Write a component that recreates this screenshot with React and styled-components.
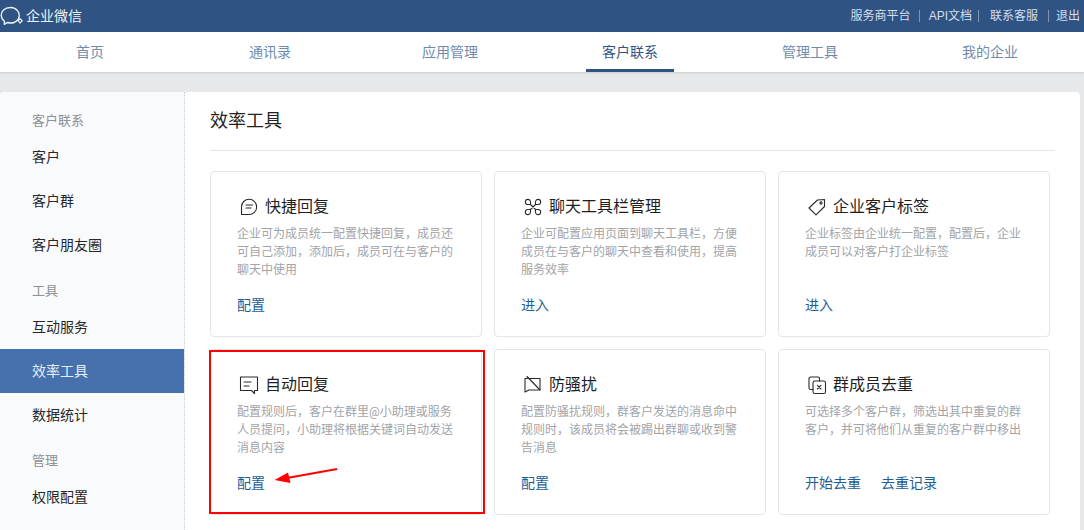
import React from "react";
import styled, { createGlobalStyle } from "styled-components";

const Global = createGlobalStyle`
  html, body { margin: 0; padding: 0; height: 530px; overflow: hidden; background: #e7e8ea; }
  body { font-family: "Liberation Sans", "Noto Sans CJK SC", sans-serif; }
  * { box-sizing: border-box; }
`;

const Page = styled.div`width: 1084px; height: 530px; overflow: hidden;`;
const TopBar = styled.header`
  height: 32px; background: #2f5484; display: flex; align-items: center; justify-content: space-between; padding-right: 4px;
`;
const Brand = styled.div`display: flex; align-items: center; gap: 2px; color: #eef2f6; font-size: 14px; margin-top: -2px;`;
const TopLinks = styled.nav`display: flex; align-items: center;`;
const TopLink = styled.a`
  color: #d6deea; font-size: 12px; line-height: 12px; padding: 0 ${p => p.$r}px 0 ${p => p.$l}px;
  border-right: ${p => p.$r ? "1px solid #7f97b5" : "none"};
`;
const MainNav = styled.nav`
  height: 40px; background: #fff; display: grid; grid-template-columns: repeat(6, 180px); justify-content: start;
  box-shadow: 0 1px 2px rgba(0,0,0,.13);
`;
const NavItem = styled.a`
  display: flex; justify-content: center; align-items: center; height: 40px; padding-bottom: 2px; font-size: 14px; color: #6f8bae; position: relative;
  ${p => p.$active && `
    color: #2f5484;
    &::after { content: ""; position: absolute; left: 46px; width: 88px; bottom: 0; height: 3px; background: #2f5484; }
  `}
`;
const Panel = styled.main`
  margin-top: 20px; width: 1080px; height: 480px; background: #fff; border-radius: 4px 4px 0 0; display: flex; overflow: hidden;
`;
const Sidebar = styled.aside`
  width: 185px; flex: none; background: #f9fafc; border-right: 1px dotted #c9ccd2; padding-top: 13px;
`;
const SideLabel = styled.div`
  height: 30px; padding-left: 32px; font-size: 13px; line-height: 32px; color: #8e9196;
  margin-top: ${p => p.$first ? 0 : 8}px;
`;
const SideItem = styled.a`
  display: block; height: 44px; line-height: 44px; padding-left: 32px; font-size: 14px;
  color: ${p => p.$active ? "#e8eef6" : "#26282b"}; background: ${p => p.$active ? "#4671ad" : "transparent"};
`;
const Content = styled.section`flex: 1; padding-left: 25px; padding-right: 25px;`;
const Title = styled.h1`
  margin: 0; height: 59px; border-bottom: 1px solid #e4e6e9; font-size: 18px; font-weight: 400; color: #222; line-height: 58px;
`;
const Grid = styled.div`
  margin-top: 20px; display: grid; grid-template-columns: repeat(3, 272px); grid-auto-rows: 166px; gap: 12px;
`;
const Card = styled.article`
  position: relative; border: 1px solid #e3e5e9; border-radius: 4px; background: #fff; padding: 24px 26px 0; display: flex; flex-direction: column;
`;
const CardHead = styled.div`display: flex; align-items: center; height: 22px; margin-left: 2px; gap: 6px;`;
const IconSlot = styled.span`width: 20px; height: 20px; display: flex; align-items: center; justify-content: center; flex: none; color: #2a2a2a;`;
const CardTitle = styled.h2`margin: 0; font-size: 16px; line-height: 22px; font-weight: 400; color: #1f1f1f;`;
const Desc = styled.p`
  margin: 7px 0 0; font-family: Roboto, "Noto Sans CJK SC", sans-serif; font-size: 12px; line-height: 18px; color: #a2a4a7; height: 54px; width: 218px;
`;
const Links = styled.div`display: flex; gap: 20px; margin-top: 16px;`;
const CardLink = styled.a`font-size: 14px; line-height: 20px; color: #1f5d95;`;
const Highlight = styled.div`
  position: absolute; left: -2px; top: 0; width: 276px; height: 164px; border: 2px solid #f00; pointer-events: none;
`;
const Arrow = styled.svg`position: absolute; left: 60px; top: 115px; width: 72px; height: 22px;`;

const I = ({ children }) => (
  <svg width="20" height="20" viewBox="0 0 20 20" fill="none" stroke="currentColor" strokeWidth="1.1" strokeLinecap="round" strokeLinejoin="round">{children}</svg>
);
const icons = {
  quick: <I><path d="M2.5 17.5 h7.5 a7.6 7.6 0 1 0 -7.5 -7.6 z" /><path d="M7 8 h6.5 M7 11 h5" /></I>,
  tool: <I><path d="M7.5 7.5 L12.5 12.5 M12.5 7.5 L7.5 12.5" /><path d="M7.5 7.5 L4.5 7.5 A2.6 2.6 0 1 1 7.5 4.5 Z" /><path d="M12.5 7.5 L12.5 4.5 A2.6 2.6 0 1 1 15.5 7.5 Z" /><path d="M7.5 12.5 L7.5 15.5 A2.6 2.6 0 1 1 4.5 12.5 Z" /><path d="M12.5 12.5 L15.5 12.5 A2.6 2.6 0 1 1 12.5 15.5 Z" /></I>,
  tag: <I><path d="M2 11 L10.5 3 L17.5 2.5 L17.5 9.5 L9 17.8 Z" /><circle cx="14" cy="6" r="1.1" /></I>,
  auto: <I><path d="M1.5 2 H18.5 V15.5 H15.5 V18.5 L12.5 15.5 H1.5 Z" /><path d="M5 7 H12 M5 11 H10" /></I>,
  block: <I><path d="M2 17 V3.5 H17 V15 H6 L2 17 Z" /><path d="M4 1.5 L17 15" /></I>,
  dedupe: <I><path d="M6 14.5 H3.5 A1.5 1.5 0 0 1 2 13 V3.5 A1.5 1.5 0 0 1 3.5 2 H11 A1.5 1.5 0 0 1 12.5 3.5 V6" /><rect x="6" y="6" width="12.5" height="12.5" rx="1.8" /><path d="M10.4 10.4 L14 14 M14 10.4 L10.4 14" /></I>,
};

const cards = [
  { icon: "quick", title: "快捷回复", desc: "企业可为成员统一配置快捷回复，成员还可自己添加，添加后，成员可在与客户的聊天中使用", links: ["配置"] },
  { icon: "tool", title: "聊天工具栏管理", desc: "企业可配置应用页面到聊天工具栏，方便成员在与客户的聊天中查看和使用，提高服务效率", links: ["进入"] },
  { icon: "tag", title: "企业客户标签", desc: "企业标签由企业统一配置，配置后，企业成员可以对客户打企业标签", links: ["进入"] },
  { icon: "auto", title: "自动回复", desc: "配置规则后，客户在群里@小助理或服务人员提问，小助理将根据关键词自动发送消息内容", links: ["配置"], marked: true },
  { icon: "block", title: "防骚扰", desc: "配置防骚扰规则，群客户发送的消息命中规则时，该成员将会被踢出群聊或收到警告消息", links: ["配置"] },
  { icon: "dedupe", title: "群成员去重", desc: "可选择多个客户群，筛选出其中重复的群客户，并可将他们从重复的客户群中移出", links: ["开始去重", "去重记录"] },
];

const sidebar = [
  { label: "客户联系", items: ["客户", "客户群", "客户朋友圈"] },
  { label: "工具", items: ["互动服务", "效率工具", "数据统计"] },
  { label: "管理", items: ["权限配置"] },
];

export default function App() {
  return (
    <Page>
      <Global />
      <TopBar>
        <Brand>
          <svg width="24" height="22" viewBox="0 0 24 22" fill="none" stroke="#eef2f6" strokeWidth="1.4" strokeLinecap="round" strokeLinejoin="round">
            <path d="M4.5 17.5 L4.3 20.3 L7.5 18.5 C12 19.8 17 18.5 18.6 14.5 C20.8 9 16.5 3.5 10.5 3.5 C4.5 3.5 1 7.5 1.2 11.5 C1.3 14 2.7 16 4.5 17.5 Z" />
            <path d="M18 16.5 L20 14.8 L22.2 16.8 L20 19 Z" strokeWidth="1.2" />
          </svg>
          <span>企业微信</span>
        </Brand>
        <TopLinks>
          <TopLink $l={0} $r={8}>服务商平台</TopLink>
          <TopLink $l={9} $r={6}>API文档</TopLink>
          <TopLink $l={11} $r={10}>联系客服</TopLink>
          <TopLink $l={7} $r={0}>退出</TopLink>
        </TopLinks>
      </TopBar>
      <MainNav>
        {["首页", "通讯录", "应用管理", "客户联系", "管理工具", "我的企业"].map((n) => (
          <NavItem key={n} $active={n === "客户联系"}>{n}</NavItem>
        ))}
      </MainNav>
      <Panel>
        <Sidebar>
          {sidebar.map((g, i) => (
            <React.Fragment key={g.label}>
              <SideLabel $first={i === 0}>{g.label}</SideLabel>
              {g.items.map((it) => <SideItem key={it} $active={it === "效率工具"}>{it}</SideItem>)}
            </React.Fragment>
          ))}
        </Sidebar>
        <Content>
          <Title>效率工具</Title>
          <Grid>
            {cards.map((c) => (
              <Card key={c.title}>
                <CardHead>
                  <IconSlot>{icons[c.icon]}</IconSlot>
                  <CardTitle>{c.title}</CardTitle>
                </CardHead>
                <Desc>{c.desc}</Desc>
                <Links>{c.links.map((l) => <CardLink key={l}>{l}</CardLink>)}</Links>
                {c.marked && (
                  <>
                    <Highlight />
                    <Arrow viewBox="0 0 72 22">
                      <path d="M66 4 L16 13" stroke="#f00" strokeWidth="2" />
                      <path d="M3.5 15 L17 7.5 L19.5 18 Z" fill="#f00" />
                    </Arrow>
                  </>
                )}
              </Card>
            ))}
          </Grid>
        </Content>
      </Panel>
    </Page>
  );
}
